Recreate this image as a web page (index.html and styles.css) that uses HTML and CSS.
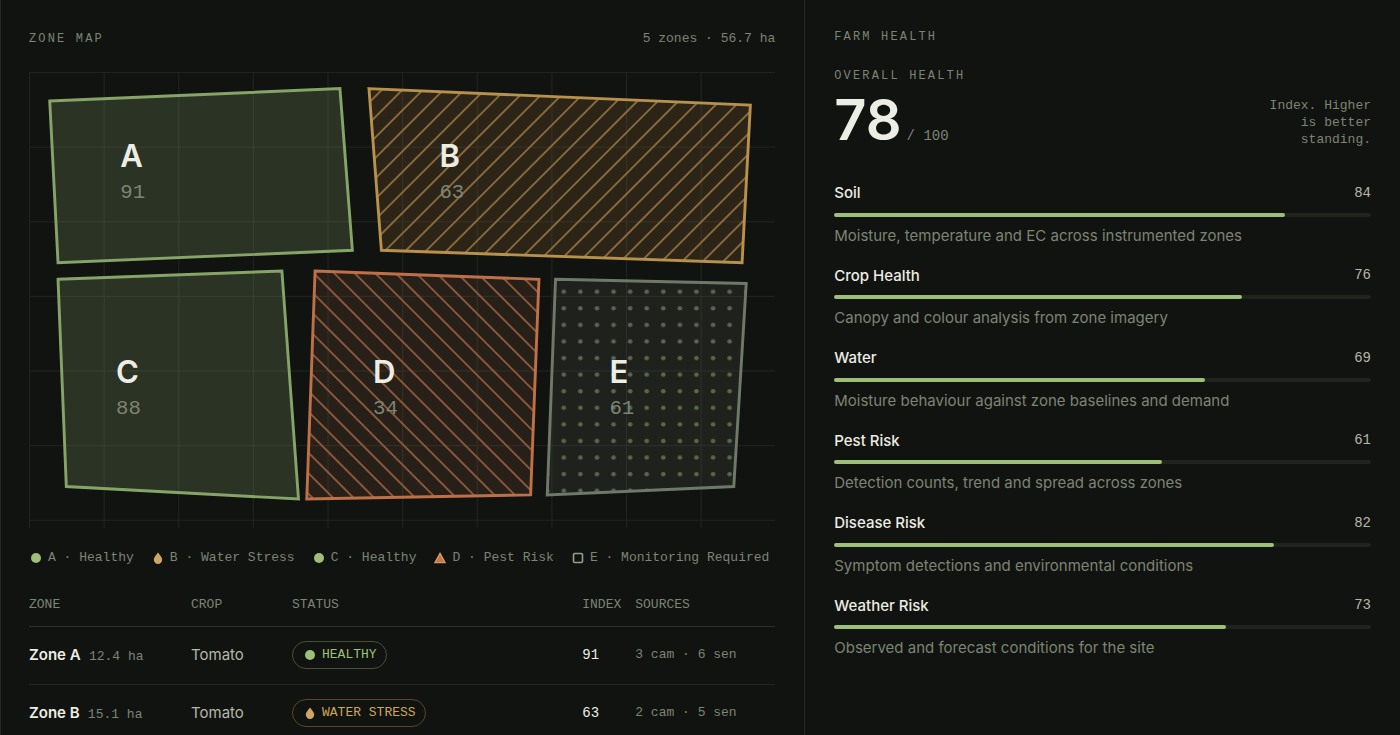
FILE: index.html
```html
<!DOCTYPE html>
<html lang="en">
<head>
  <meta charset="UTF-8">
  <meta name="viewport" content="width=device-width, initial-scale=1.0">
  <title>Farm Overview</title>
  <link rel="stylesheet" href="styles.css">
</head>
<body>
  <!-- Status icons shared by the legend and the table -->
  <svg class="sprite" aria-hidden="true">
    <symbol id="icon-healthy" viewBox="0 0 14 14">
      <circle cx="7" cy="7" r="5" fill="#9cc078"/>
    </symbol>
    <symbol id="icon-water" viewBox="0 0 14 14">
      <path d="M7 1.6C8.6 4 11.2 6.3 11.2 8.8a4.2 4.2 0 0 1-8.4 0C2.8 6.3 5.4 4 7 1.6z" fill="#cda564"/>
    </symbol>
    <symbol id="icon-pest" viewBox="0 0 14 14">
      <path d="M7 2.4L12 11.6H2z" fill="#c4764c" stroke="#d49a5e" stroke-width="1.4"/>
    </symbol>
    <symbol id="icon-monitor" viewBox="0 0 14 14">
      <rect x="2.5" y="2.5" width="9" height="9" rx="1.2" fill="none" stroke="#93a08b" stroke-width="1.6"/>
    </symbol>
  </svg>

  <main class="dashboard">
    <!-- Zone Map -->
    <section class="panel zones">
      <header class="zones-header">
        <h2 class="label">Zone Map</h2>
        <span class="mono">5 zones · 56.7 ha</span>
      </header>

      <svg class="map" viewBox="0 0 180 110" role="img" aria-label="Map of zones A to E">
        <defs>
          <pattern id="grid" width="18" height="18" patternUnits="userSpaceOnUse">
            <path d="M18 0H0V18" fill="none" stroke="#202421" stroke-width="0.5"/>
          </pattern>
          <pattern id="hatch-water" width="3.5" height="3.5" patternUnits="userSpaceOnUse" patternTransform="rotate(45)">
            <path d="M0 0V3.5" stroke="#8b6c3c" stroke-width="0.9"/>
          </pattern>
          <pattern id="hatch-pest" width="3.5" height="3.5" patternUnits="userSpaceOnUse" patternTransform="rotate(-45)">
            <path d="M0 0V3.5" stroke="#8e593c" stroke-width="0.9"/>
          </pattern>
          <pattern id="dots" width="4" height="4" patternUnits="userSpaceOnUse">
            <circle cx="1" cy="1" r="0.55" fill="#5b6554"/>
          </pattern>
        </defs>
        <rect width="180" height="110" fill="url(#grid)"/>

        <polygon class="zone zone-healthy" points="5,7 75,4 78,43 7,46"/>
        <polygon class="zone zone-healthy" points="7,50 61,48 65,103 9,100"/>

        <polygon class="fill-water" points="82,4 174,8 172,46 85,43"/>
        <polygon class="zone zone-water" points="82,4 174,8 172,46 85,43"/>

        <polygon class="fill-pest" points="69,48 123,50 121,102 67,103"/>
        <polygon class="zone zone-pest" points="69,48 123,50 121,102 67,103"/>

        <polygon class="fill-monitor" points="127,50 173,51 170,100 125,102"/>
        <polygon class="zone zone-monitor" points="127,50 173,51 170,100 125,102"/>

        <text class="zone-name" x="22" y="23">A</text>
        <text class="zone-index" x="22" y="30.5">91</text>
        <text class="zone-name" x="99" y="23">B</text>
        <text class="zone-index" x="99" y="30.5">63</text>
        <text class="zone-name" x="21" y="75">C</text>
        <text class="zone-index" x="21" y="82.5">88</text>
        <text class="zone-name" x="83" y="75">D</text>
        <text class="zone-index" x="83" y="82.5">34</text>
        <text class="zone-name" x="140" y="75">E</text>
        <text class="zone-index" x="140" y="82.5">61</text>
      </svg>

      <ul class="legend mono">
        <li><svg class="icon"><use href="#icon-healthy"/></svg>A · Healthy</li>
        <li><svg class="icon"><use href="#icon-water"/></svg>B · Water Stress</li>
        <li><svg class="icon"><use href="#icon-healthy"/></svg>C · Healthy</li>
        <li><svg class="icon"><use href="#icon-pest"/></svg>D · Pest Risk</li>
        <li><svg class="icon"><use href="#icon-monitor"/></svg>E · Monitoring Required</li>
      </ul>

      <table class="zone-table">
        <thead>
          <tr>
            <th class="col-zone">Zone</th>
            <th class="col-crop">Crop</th>
            <th>Status</th>
            <th class="col-index">Index</th>
            <th class="col-sources">Sources</th>
          </tr>
        </thead>
        <tbody>
          <tr>
            <td><strong>Zone A</strong> <span class="mono">12.4 ha</span></td>
            <td>Tomato</td>
            <td><span class="badge badge-healthy"><svg class="icon"><use href="#icon-healthy"/></svg>Healthy</span></td>
            <td class="index">91</td>
            <td class="mono">3 cam · 6 sen</td>
          </tr>
          <tr>
            <td><strong>Zone B</strong> <span class="mono">15.1 ha</span></td>
            <td>Tomato</td>
            <td><span class="badge badge-water"><svg class="icon"><use href="#icon-water"/></svg>Water Stress</span></td>
            <td class="index">63</td>
            <td class="mono">2 cam · 5 sen</td>
          </tr>
        </tbody>
      </table>
    </section>

    <!-- Farm Health -->
    <section class="panel health">
      <h2 class="label">Farm Health</h2>

      <div class="overall">
        <div>
          <h3 class="label">Overall Health</h3>
          <p class="score"><span class="score-value">78</span><span class="score-max">/ 100</span></p>
        </div>
        <p class="note mono">Index. Higher is better standing.</p>
      </div>

      <ul class="metrics">
        <li class="metric">
          <div class="metric-head"><span>Soil</span><span class="metric-value">84</span></div>
          <div class="bar"><div class="bar-fill" style="width: 84%"></div></div>
          <p>Moisture, temperature and EC across instrumented zones</p>
        </li>
        <li class="metric">
          <div class="metric-head"><span>Crop Health</span><span class="metric-value">76</span></div>
          <div class="bar"><div class="bar-fill" style="width: 76%"></div></div>
          <p>Canopy and colour analysis from zone imagery</p>
        </li>
        <li class="metric">
          <div class="metric-head"><span>Water</span><span class="metric-value">69</span></div>
          <div class="bar"><div class="bar-fill" style="width: 69%"></div></div>
          <p>Moisture behaviour against zone baselines and demand</p>
        </li>
        <li class="metric">
          <div class="metric-head"><span>Pest Risk</span><span class="metric-value">61</span></div>
          <div class="bar"><div class="bar-fill" style="width: 61%"></div></div>
          <p>Detection counts, trend and spread across zones</p>
        </li>
        <li class="metric">
          <div class="metric-head"><span>Disease Risk</span><span class="metric-value">82</span></div>
          <div class="bar"><div class="bar-fill" style="width: 82%"></div></div>
          <p>Symptom detections and environmental conditions</p>
        </li>
        <li class="metric">
          <div class="metric-head"><span>Weather Risk</span><span class="metric-value">73</span></div>
          <div class="bar"><div class="bar-fill" style="width: 73%"></div></div>
          <p>Observed and forecast conditions for the site</p>
        </li>
      </ul>
    </section>
  </main>
</body>
</html>
```

FILE: styles.css
```css
/* General Styles */
* {
  box-sizing: border-box;
  margin: 0;
  padding: 0;
}

body {
  font-family: Inter, 'Liberation Sans', sans-serif;
  font-size: 15px;
  line-height: 1.5;
  background: #111310;
  color: #ecede4;
}

ul {
  list-style: none;
}

.sprite {
  position: absolute;
  width: 0;
  height: 0;
}

.icon {
  width: 14px;
  height: 14px;
  flex: none;
}

.mono {
  font-family: 'Liberation Mono', monospace;
  font-size: 13px;
  color: #7c8474;
}

.label {
  font-family: 'Liberation Mono', monospace;
  font-size: 12px;
  font-weight: 400;
  line-height: 16px;
  letter-spacing: 0.18em;
  text-transform: uppercase;
  color: #7c8474;
}

/* Layout */
.dashboard {
  display: grid;
  grid-template-columns: 1.35fr 1fr;
  min-height: 100vh;
}

.panel {
  border-left: 1px solid #262a27;
}

.zones {
  padding: 29px 29px 0 28px;
}

.health {
  padding: 29px;
}

/* Zone Map */
.zones-header {
  display: flex;
  justify-content: space-between;
  align-items: center;
  line-height: 20px;
  margin-bottom: 23px;
}

.map {
  display: block;
  width: 100%;
}

.zone {
  fill: none;
  stroke-width: 0.7;
}

.zone-healthy {
  fill: rgba(156, 192, 120, 0.19);
  stroke: #86a468;
}

.zone-water {
  fill: url(#hatch-water);
  stroke: #b8914c;
}

.zone-pest {
  fill: url(#hatch-pest);
  stroke: #bf7049;
}

.zone-monitor {
  fill: url(#dots);
  stroke: #6f7969;
}

.fill-water {
  fill: rgba(208, 140, 70, 0.14);
}

.fill-pest {
  fill: rgba(208, 130, 80, 0.12);
}

.fill-monitor {
  fill: rgba(147, 160, 139, 0.1);
}

.zone-name {
  font-size: 7.5px;
  font-weight: 600;
  fill: #ecede4;
}

.zone-index {
  font-family: 'Liberation Mono', monospace;
  font-size: 5px;
  fill: #7c8474;
}

/* Legend */
.legend {
  display: flex;
  flex-wrap: wrap;
  gap: 8px 17px;
  margin-top: 20px;
  line-height: 20px;
}

.legend li {
  display: flex;
  align-items: center;
  gap: 5px;
}

/* Zone Table */
.zone-table {
  width: 100%;
  margin-top: 16px;
  table-layout: fixed;
  border-collapse: collapse;
}

.zone-table th {
  height: 42px;
  font-family: 'Liberation Mono', monospace;
  font-size: 13px;
  font-weight: 400;
  text-align: left;
  text-transform: uppercase;
  color: #7c8474;
  border-bottom: 1px solid #2b2f2b;
}

.zone-table td {
  height: 58px;
  color: #b4b8aa;
  border-bottom: 1px solid #222622;
}

.zone-table td.mono {
  color: #7c8474;
}

.zone-table strong {
  margin-right: 4px;
  font-weight: 600;
  color: #ecede4;
}

.zone-table .index {
  font-family: 'Liberation Mono', monospace;
  font-size: 14px;
  color: #ecede4;
}

.col-zone {
  width: 162px;
}

.col-crop {
  width: 101px;
}

.col-index {
  width: 53px;
}

.col-sources {
  width: 140px;
}

.badge {
  display: inline-flex;
  align-items: center;
  gap: 5px;
  height: 28px;
  padding: 0 9px 0 10px;
  border: 1px solid;
  border-radius: 14px;
  font-family: 'Liberation Mono', monospace;
  font-size: 13px;
  text-transform: uppercase;
  vertical-align: middle;
}

.badge-healthy {
  color: #9cc078;
  border-color: #455039;
}

.badge-water {
  color: #d0a55c;
  border-color: #5a4529;
}

/* Farm Health */
.overall {
  display: flex;
  justify-content: space-between;
  align-items: flex-end;
  margin-top: 23px;
}

.score {
  display: flex;
  align-items: baseline;
  gap: 5px;
  margin-top: 8px;
}

.score-value {
  font-size: 56px;
  font-weight: 600;
  line-height: 56px;
}

.score-max {
  font-family: 'Liberation Mono', monospace;
  font-size: 14px;
  color: #7c8474;
}

.note {
  width: 110px;
  line-height: 17px;
  text-align: right;
}

.metrics {
  display: flex;
  flex-direction: column;
  gap: 19px;
  margin-top: 34px;
}

.metric {
  display: flex;
  flex-direction: column;
  gap: 8px;
}

.metric-head {
  display: flex;
  justify-content: space-between;
  align-items: center;
  font-weight: 500;
}

.metric-value {
  font-family: 'Liberation Mono', monospace;
  font-size: 14px;
  font-weight: 400;
  color: #b4b8aa;
}

.metric p {
  line-height: 1.4;
  color: #7c8474;
}

.bar {
  height: 4px;
  border-radius: 2px;
  background: #20231e;
}

.bar-fill {
  height: 100%;
  border-radius: 2px;
  background: #9cc078;
}

/* Responsive Design */
@media (max-width: 900px) {
  .dashboard {
    grid-template-columns: 1fr;
  }
}
```
